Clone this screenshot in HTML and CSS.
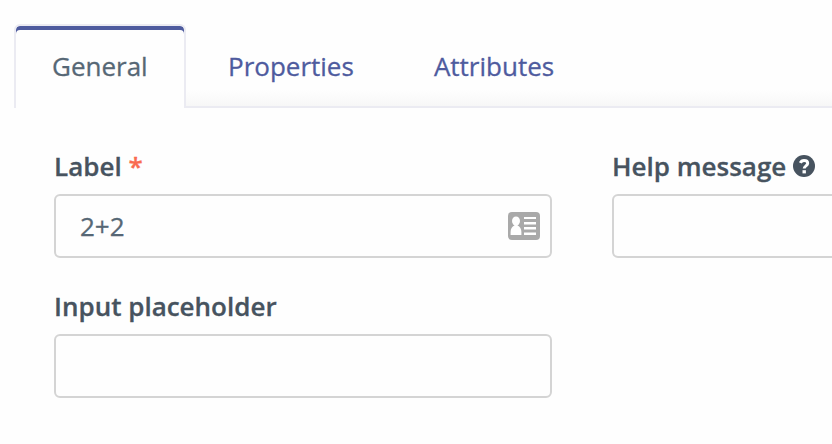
FILE: index.html
```html
<!DOCTYPE html>
<html lang="en">
<head>
    <meta charset="UTF-8">
    <meta name="viewport" content="width=device-width, initial-scale=1.0">
    <title>Field settings</title>
    <link rel="stylesheet" href="styles.css">
</head>
<body>
    <nav class="tabs">
        <a class="tab active">General</a>
        <a class="tab">Properties</a>
        <a class="tab">Attributes</a>
    </nav>
    <form class="fields">
        <div class="formGroup">
            <label for="label">Label <span class="required">*</span></label>
            <div class="inputWrap">
                <input type="text" id="label" value="2+2">
                <svg class="cardIcon" width="32" height="28" viewBox="0 0 32 28">
                    <rect width="32" height="28" rx="4" fill="#a9a9a9"/>
                    <g fill="#fff">
                        <ellipse cx="8" cy="9" rx="4" ry="4.5"/>
                        <path d="M2.6 23v-3c0-3 1.4-5.500 3.800-6.500V12h3.200v1.500c2.400 1 3.800 3.500 3.800 6.500v3z"/>
                        <path d="M16 5h12v2H16zM16 10h12v2.500H16zM16 15h12v2.500H16zM16 20.500h12V23H16z"/>
                    </g>
                </svg>
            </div>
        </div>
        <div class="formGroup">
            <label for="help"><span>Help message</span><svg class="helpIcon" width="22" height="22" viewBox="0 0 22 22">
                    <circle cx="11" cy="11" r="11" fill="#47535f"/>
                    <path d="M7.300 7.900C8 6.300 9.200 5.400 11 5.400c2.200 0 3.700 1.200 3.700 2.900 0 2.600-3.500 2.500-3.500 5.300" fill="none" stroke="#fff" stroke-width="3"/>
                    <path d="M9.500 15.200h3.400v3.200H9.500z" fill="#fff"/>
                </svg></label>
            <input type="text" id="help">
        </div>
        <div class="formGroup">
            <label for="placeholder">Input placeholder</label>
            <input type="text" id="placeholder">
        </div>
    </form>
</body>
</html>
```

FILE: styles.css
```css
* {
    margin: 0;
    padding: 0;
    box-sizing: border-box;
}

body {
    font-family: 'Open Sans', sans-serif;
    font-size: 26px;
    color: #566775;
    background: #fefefe;
    height: 444px;
    overflow: hidden;
    -webkit-text-stroke: 0.3px;
}

.tabs {
    display: flex;
    height: 108px;
    padding: 24px 0 0 14px;
    background: linear-gradient(#ebebf2, #ebebf2) 186px 106px / 100% 2px no-repeat,
        linear-gradient(to top, #f7f7f7, #fefefe) 186px 90px / 100% 16px no-repeat;
}

.tab {
    padding: 24px 38px 0 42px;
    line-height: 36px;
    color: #4e5b9e;
}

.tab.active {
    width: 172px;
    padding: 22px 0 0 36px;
    color: #566775;
    background: #fefefe;
    border: 2px solid #ebebf2;
    border-bottom: none;
    border-radius: 6px 6px 0 0;
    box-shadow: inset 0 4px #4e5b9e;
}

.fields {
    display: grid;
    grid-template-columns: 498px 498px;
    gap: 30px 60px;
    padding: 40px 0 0 54px;
    overflow: hidden;
}

label {
    display: flex;
    align-items: center;
    height: 36px;
    margin-bottom: 10px;
    font-weight: 600;
    color: #47535f;
    white-space: pre;
}

.required {
    color: #f96b50;
}

.helpIcon {
    margin-left: 7px;
}

.inputWrap {
    position: relative;
}

input {
    display: block;
    width: 100%;
    height: 64px;
    padding: 0 24px;
    font: inherit;
    color: #566775;
    background: #fefefe;
    border: 2px solid #d4d4d4;
    border-radius: 6px;
    outline: none;
}

.cardIcon {
    position: absolute;
    top: 18px;
    right: 12px;
}
```
